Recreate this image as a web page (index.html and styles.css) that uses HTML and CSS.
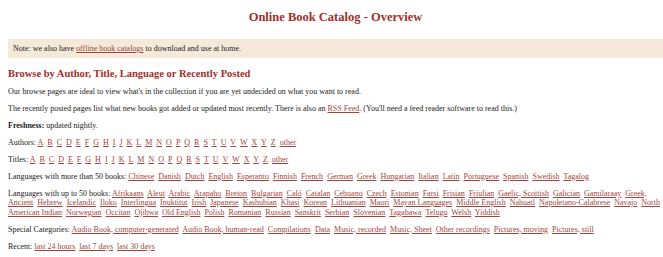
FILE: index.html
```html
<!DOCTYPE html>
<html>
<head>
<meta charset="utf-8">
<link rel="stylesheet" href="styles.css">
</head>
<body>
<h1 class="title">Online Book Catalog - Overview</h1>
<div class="note">Note: we also have <a href="#">offline book catalogs</a> to download and use at home.</div>
<h2 class="sub">Browse by Author, Title, Language or Recently Posted</h2>
<p>Our browse pages are ideal to view what's in the collection if you are yet undecided on what you want to read.</p>
<p>The recently posted pages list what new books got added or updated most recently. There is also an <a href="#">RSS Feed</a>. (You'll need a feed reader software to read this.)</p>
<p><b>Freshness:</b> updated nightly.</p>
<p class="links">Authors: <a href="#">A</a> <a href="#">B</a> <a href="#">C</a> <a href="#">D</a> <a href="#">E</a> <a href="#">F</a> <a href="#">G</a> <a href="#">H</a> <a href="#">I</a> <a href="#">J</a> <a href="#">K</a> <a href="#">L</a> <a href="#">M</a> <a href="#">N</a> <a href="#">O</a> <a href="#">P</a> <a href="#">Q</a> <a href="#">R</a> <a href="#">S</a> <a href="#">T</a> <a href="#">U</a> <a href="#">V</a> <a href="#">W</a> <a href="#">X</a> <a href="#">Y</a> <a href="#">Z</a> <a href="#">other</a></p>
<p class="links">Titles: <a href="#">A</a> <a href="#">B</a> <a href="#">C</a> <a href="#">D</a> <a href="#">E</a> <a href="#">F</a> <a href="#">G</a> <a href="#">H</a> <a href="#">I</a> <a href="#">J</a> <a href="#">K</a> <a href="#">L</a> <a href="#">M</a> <a href="#">N</a> <a href="#">O</a> <a href="#">P</a> <a href="#">Q</a> <a href="#">R</a> <a href="#">S</a> <a href="#">T</a> <a href="#">U</a> <a href="#">V</a> <a href="#">W</a> <a href="#">X</a> <a href="#">Y</a> <a href="#">Z</a> <a href="#">other</a></p>
<p class="links">Languages with more than 50 books: <a href="#">Chinese</a> <a href="#">Danish</a> <a href="#">Dutch</a> <a href="#">English</a> <a href="#">Esperanto</a> <a href="#">Finnish</a> <a href="#">French</a> <a href="#">German</a> <a href="#">Greek</a> <a href="#">Hungarian</a> <a href="#">Italian</a> <a href="#">Latin</a> <a href="#">Portuguese</a> <a href="#">Spanish</a> <a href="#">Swedish</a> <a href="#">Tagalog</a></p>
<p class="links">Languages with up to 50 books: <a href="#">Afrikaans</a> <a href="#">Aleut</a> <a href="#">Arabic</a> <a href="#">Arapaho</a> <a href="#">Breton</a> <a href="#">Bulgarian</a> <a href="#">Caló</a> <a href="#">Catalan</a> <a href="#">Cebuano</a> <a href="#">Czech</a> <a href="#">Estonian</a> <a href="#">Farsi</a> <a href="#">Frisian</a> <a href="#">Friulian</a> <a href="#">Gaelic, Scottish</a> <a href="#">Galician</a> <a href="#">Gamilaraay</a> <a href="#">Greek,</a> <a href="#">Ancient</a> <a href="#">Hebrew</a> <a href="#">Icelandic</a> <a href="#">Iloko</a> <a href="#">Interlingua</a> <a href="#">Inuktitut</a> <a href="#">Irish</a> <a href="#">Japanese</a> <a href="#">Kashubian</a> <a href="#">Khasi</a> <a href="#">Korean</a> <a href="#">Lithuanian</a> <a href="#">Maori</a> <a href="#">Mayan Languages</a> <a href="#">Middle English</a> <a href="#">Nahuatl</a> <a href="#">Napoletano-Calabrese</a> <a href="#">Navajo</a> <a href="#">North</a> <a href="#">American Indian</a> <a href="#">Norwegian</a> <a href="#">Occitan</a> <a href="#">Ojibwa</a> <a href="#">Old English</a> <a href="#">Polish</a> <a href="#">Romanian</a> <a href="#">Russian</a> <a href="#">Sanskrit</a> <a href="#">Serbian</a> <a href="#">Slovenian</a> <a href="#">Tagabawa</a> <a href="#">Telugu</a> <a href="#">Welsh</a> <a href="#">Yiddish</a></p>
<p class="links">Special Categories: <a href="#">Audio Book, computer-generated</a> <a href="#">Audio Book, human-read</a> <a href="#">Compilations</a> <a href="#">Data</a> <a href="#">Music, recorded</a> <a href="#">Music, Sheet</a> <a href="#">Other recordings</a> <a href="#">Pictures, moving</a> <a href="#">Pictures, still</a></p>
<p class="links">Recent: <a href="#">last 24 hours</a> <a href="#">last 7 days</a> <a href="#">last 30 days</a></p>
</body>
</html>
```

FILE: styles.css
```css
html, body {
  background: #ffffff;
}
body {
  margin: 0 0 0 8px;
  font-family: "Liberation Serif", "Times New Roman", serif;
  font-size: 8px;
  color: #222222;
}
a {
  color: #a3453c;
}
.links a {
  margin-right: 2px;
}
.title {
  margin: 0;
  padding-top: 10px;
  text-align: center;
  font-size: 12.5px;
  font-weight: bold;
  color: #a0302a;
  height: 30px;
  box-sizing: border-box;
}
.note {
  margin: 9px 0 0 -2px;
  padding: 5px 7px;
  background: #f5ead9;
}
.sub {
  margin: 10px 0 0 0;
  font-size: 10.5px;
  font-weight: bold;
  color: #a0302a;
}
p {
  margin: 7.5px 0 0 0;
  line-height: 9.5px;
}
```
